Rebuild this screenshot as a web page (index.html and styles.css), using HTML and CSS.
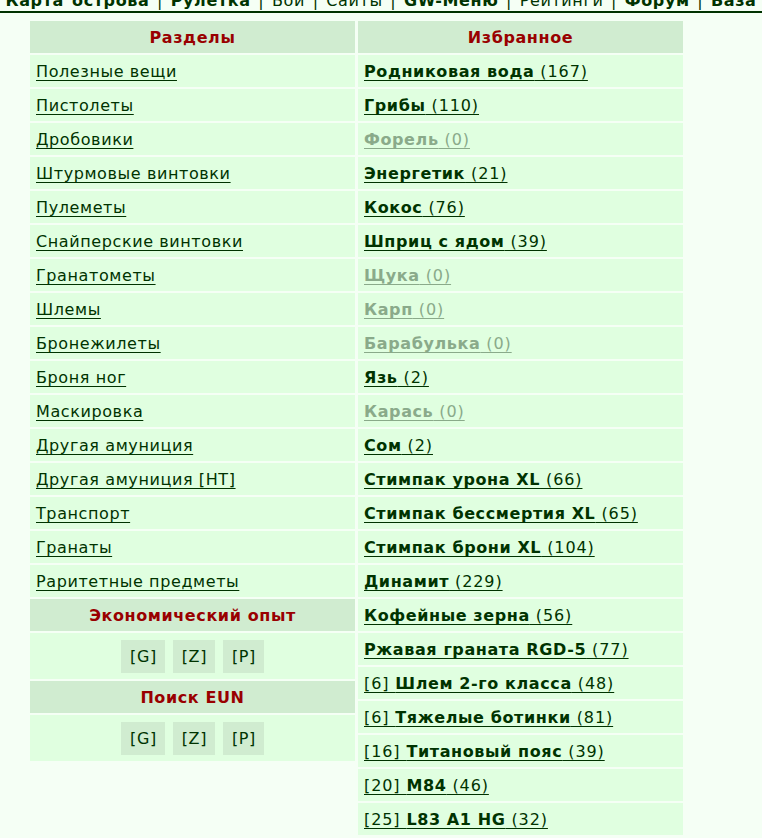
FILE: index.html
```html
<!DOCTYPE html>
<html lang="ru">

<head>
  <meta charset="UTF-8" />
  <title>Магазин | GW</title>
  <link rel="stylesheet" href="styles.css">
</head>

<body>

  <!-- Top menu -->
  <div class="top-menu">
    <a href="#" class="bold">Карта острова</a> |
    <a href="#" class="bold">Рулетка</a> |
    <a href="#">Бой</a> |
    <a href="#">Сайты</a> |
    <a href="#" class="bold">GW-Меню</a> |
    <a href="#">Рейтинги</a> |
    <a href="#" class="bold">Форум</a> |
    <a href="#" class="bold">База</a>
  </div>

  <div class="shop">

    <!-- Sections -->
    <div class="col">
      <div class="head">Разделы</div>
      <div class="cell"><a href="#">Полезные вещи</a></div>
      <div class="cell"><a href="#">Пистолеты</a></div>
      <div class="cell"><a href="#">Дробовики</a></div>
      <div class="cell"><a href="#">Штурмовые винтовки</a></div>
      <div class="cell"><a href="#">Пулеметы</a></div>
      <div class="cell"><a href="#">Снайперские винтовки</a></div>
      <div class="cell"><a href="#">Гранатометы</a></div>
      <div class="cell"><a href="#">Шлемы</a></div>
      <div class="cell"><a href="#">Бронежилеты</a></div>
      <div class="cell"><a href="#">Броня ног</a></div>
      <div class="cell"><a href="#">Маскировка</a></div>
      <div class="cell"><a href="#">Другая амуниция</a></div>
      <div class="cell"><a href="#">Другая амуниция [HT]</a></div>
      <div class="cell"><a href="#">Транспорт</a></div>
      <div class="cell"><a href="#">Гранаты</a></div>
      <div class="cell"><a href="#">Раритетные предметы</a></div>

      <div class="head">Экономический опыт</div>
      <div class="cell btns">
        <a href="#" class="sq">[G]</a>
        <a href="#" class="sq">[Z]</a>
        <a href="#" class="sq">[P]</a>
      </div>

      <div class="head">Поиск EUN</div>
      <div class="cell btns">
        <a href="#" class="sq">[G]</a>
        <a href="#" class="sq">[Z]</a>
        <a href="#" class="sq">[P]</a>
      </div>
    </div>

    <!-- Favourites -->
    <div class="col fav">
      <div class="head">Избранное</div>
      <div class="cell"><a href="#"><b>Родниковая вода</b> (167)</a></div>
      <div class="cell"><a href="#"><b>Грибы</b> (110)</a></div>
      <div class="cell"><a href="#" class="empty"><b>Форель</b> (0)</a></div>
      <div class="cell"><a href="#"><b>Энергетик</b> (21)</a></div>
      <div class="cell"><a href="#"><b>Кокос</b> (76)</a></div>
      <div class="cell"><a href="#"><b>Шприц с ядом</b> (39)</a></div>
      <div class="cell"><a href="#" class="empty"><b>Щука</b> (0)</a></div>
      <div class="cell"><a href="#" class="empty"><b>Карп</b> (0)</a></div>
      <div class="cell"><a href="#" class="empty"><b>Барабулька</b> (0)</a></div>
      <div class="cell"><a href="#"><b>Язь</b> (2)</a></div>
      <div class="cell"><a href="#" class="empty"><b>Карась</b> (0)</a></div>
      <div class="cell"><a href="#"><b>Сом</b> (2)</a></div>
      <div class="cell"><a href="#"><b>Стимпак урона XL</b> (66)</a></div>
      <div class="cell"><a href="#"><b>Стимпак бессмертия XL</b> (65)</a></div>
      <div class="cell"><a href="#"><b>Стимпак брони XL</b> (104)</a></div>
      <div class="cell"><a href="#"><b>Динамит</b> (229)</a></div>
      <div class="cell"><a href="#"><b>Кофейные зерна</b> (56)</a></div>
      <div class="cell"><a href="#"><b>Ржавая граната RGD-5</b> (77)</a></div>
      <div class="cell"><a href="#">[6] <b>Шлем 2-го класса</b> (48)</a></div>
      <div class="cell"><a href="#">[6] <b>Тяжелые ботинки</b> (81)</a></div>
      <div class="cell"><a href="#">[16] <b>Титановый пояс</b> (39)</a></div>
      <div class="cell"><a href="#">[20] <b>M84</b> (46)</a></div>
      <div class="cell"><a href="#">[25] <b>L83 A1 HG</b> (32)</a></div>
    </div>

  </div>

</body>

</html>
```

FILE: styles.css
```css
* {
  margin: 0;
  padding: 0;
  box-sizing: border-box;
}

body {
  font-family: 'DejaVu Sans', Verdana, sans-serif;
  font-size: 16px;
  letter-spacing: 0.6px;
  background: #f5fff5;
  color: #003300;
}

a {
  color: #003300;
}

/* Top menu */
.top-menu {
  margin-top: -7px;
  height: 20px;
  line-height: 16px;
  border-bottom: 2px solid #003300;
  text-align: center;
  white-space: nowrap;
  overflow: hidden;
  letter-spacing: 0.6px;
  word-spacing: 2px;
}

.top-menu a {
  text-decoration: none;
}

.top-menu .bold {
  font-weight: bold;
}

/* Shop table */
.shop {
  display: grid;
  grid-template-columns: 325px 325px;
  column-gap: 3px;
  align-items: start;
  margin: 8px 0 0 30px;
}

.col {
  display: flex;
  flex-direction: column;
  gap: 2px;
}

.head {
  background: #d0ecd0;
  color: #990000;
  font-weight: bold;
  text-align: center;
  height: 32px;
  line-height: 33px;
}

.cell {
  background: #e0ffe0;
  height: 32px;
  line-height: 33px;
  padding-left: 6px;
  white-space: nowrap;
}

.cell a {
  text-decoration: underline;
  text-underline-offset: 3px;
}

/* counts and levels are set a bit wider than item names */
.fav .cell a {
  letter-spacing: 0.9px;
}

.fav .cell a b {
  letter-spacing: 0.6px;
}

.cell .empty {
  color: #8aaa8a;
}

.btns {
  height: 46px;
  padding: 0;
  display: flex;
  justify-content: center;
  align-items: center;
  gap: 8px;
}

.btns .sq {
  background: #d0ecd0;
  text-decoration: none;
  height: 33px;
  line-height: 33px;
  padding: 0 8px 0 9px;
}
```
